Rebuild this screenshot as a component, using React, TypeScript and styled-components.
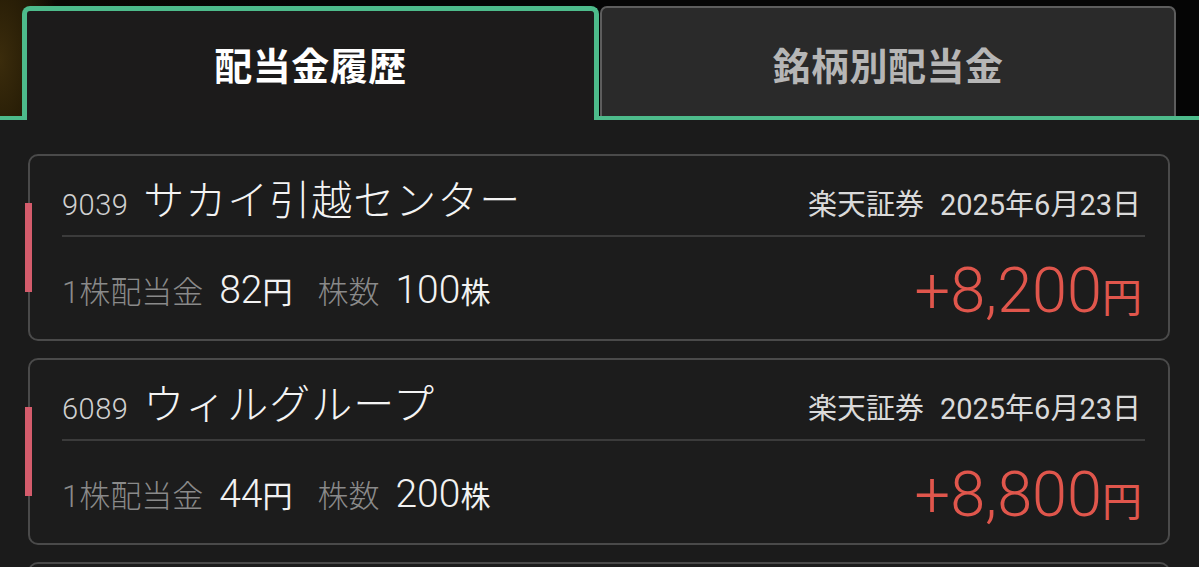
import React from 'react';
import styled, { createGlobalStyle } from 'styled-components';

const GREEN = '#4dbb8b';

const GlobalStyle = createGlobalStyle`
  html, body {
    margin: 0;
    padding: 0;
    background: #1b1b1b;
  }
  body {
    font-family: Roboto, "Noto Sans CJK JP", sans-serif;
  }
`;

const Page = styled.div`
  width: 1199px;
  height: 567px;
  overflow: hidden;
  background: #1b1b1b;
`;

const TabBar = styled.div`
  display: flex;
  align-items: flex-end;
  height: 120px;
  box-sizing: border-box;
  padding: 6px 23px 0 22px;
  border-bottom: 4px solid ${GREEN};
  background:
    radial-gradient(ellipse 60px 140px at 0 60px, #3b2c0c 0, #2a1f07 45%, transparent 100%),
    linear-gradient(90deg, #1d1606 0, #0b0904 60px, #050505 300px);
`;

const Tab = styled.div<{ active?: boolean }>`
  position: relative;
  z-index: 1;
  display: flex;
  align-items: center;
  justify-content: center;
  box-sizing: border-box;
  font-family: "Noto Sans CJK JP", sans-serif;
  font-weight: 700;
  font-size: 38px;
  letter-spacing: 0.5px;
  border-style: solid;
  border-bottom: none;
  ${({ active }) =>
    active
      ? `
    flex: 0 0 577px;
    height: 114px;
    margin-bottom: -4px;
    border-width: 5px;
    border-color: ${GREEN};
    border-radius: 8px 8px 0 0;
    background: #1c1b1b;
    color: #ffffff;
    padding-bottom: 4px;
  `
      : `
    flex: 1;
    height: 110px;
    margin-left: 1px;
    border-width: 2px;
    border-color: #5d5d5d;
    border-radius: 7px 7px 0 0;
    background: #2a2a2a;
    color: #b6b6b6;
    padding-top: 2px;
  `}
`;

const CardList = styled.div`
  display: flex;
  flex-direction: column;
  gap: 17px;
  padding: 34px 29px 0 28px;
`;

const Card = styled.div`
  position: relative;
  box-sizing: border-box;
  height: 187px;
  border: 2px solid #4a4a4a;
  border-radius: 10px;
  background: #1c1c1c;
  padding: 0 23px 0 32px;
`;

const Marker = styled.div`
  position: absolute;
  left: -5px;
  top: 47px;
  width: 7px;
  height: 89px;
  background: #d45c6c;
`;

const TopRow = styled.div`
  display: flex;
  align-items: baseline;
  justify-content: space-between;
  box-sizing: border-box;
  height: 79px;
  padding: 21px 4px 0 0;
`;

const Divider = styled.div`
  height: 2px;
  background: #3b3b3b;
`;

const BottomRow = styled.div`
  display: flex;
  align-items: center;
  justify-content: space-between;
  box-sizing: border-box;
  height: 102px;
  padding: 4px 3px 0 0;
`;

const Group = styled.div`
  display: flex;
  align-items: baseline;
`;

const Code = styled.span`
  font-size: 29px;
  font-weight: 300;
  letter-spacing: 0.5px;
  color: #d0d0d0;
  margin-right: 15px;
  line-height: 1;
`;

const Name = styled.span`
  font-family: "Noto Sans CJK JP", sans-serif;
  font-size: 41px;
  font-weight: 300;
  letter-spacing: 1px;
  color: #f4f4f4;
  line-height: 1;
`;

const Meta = styled.span<{ gap?: number }>`
  font-size: 29px;
  font-weight: 400;
  color: #dadada;
  line-height: 1;
  margin-left: ${({ gap }) => gap ?? 0}px;
`;

const Label = styled.span<{ gap?: number }>`
  font-size: 31px;
  font-weight: 300;
  color: #8a8a8a;
  line-height: 1;
  margin-left: ${({ gap }) => gap ?? 0}px;
  margin-right: 16px;
`;

const Value = styled.span`
  font-size: 39px;
  font-weight: 300;
  color: #f2f2f2;
  line-height: 1;
`;

const Unit = styled.span<{ size: number }>`
  font-family: "Noto Sans CJK JP", sans-serif;
  font-size: ${({ size }) => size}px;
  font-weight: 400;
  line-height: 1;
`;

const Amount = styled.span`
  font-size: 63px;
  font-weight: 300;
  color: #e0564c;
  line-height: 1;
`;

type Dividend = {
  code: string;
  name: string;
  broker: string;
  date: string;
  perShare: number;
  shares: number;
};

const items: Dividend[] = [
  { code: '9039', name: 'サカイ引越センター', broker: '楽天証券', date: '2025年6月23日', perShare: 82, shares: 100 },
  { code: '6089', name: 'ウィルグループ', broker: '楽天証券', date: '2025年6月23日', perShare: 44, shares: 200 },
];

const DividendCard = ({ item }: { item: Dividend }) => (
  <Card>
    <Marker />
    <TopRow>
      <Group>
        <Code>{item.code}</Code>
        <Name>{item.name}</Name>
      </Group>
      <Group>
        <Meta>{item.broker}</Meta>
        <Meta gap={16}>{item.date}</Meta>
      </Group>
    </TopRow>
    <Divider />
    <BottomRow>
      <Group>
        <Label>1株配当金</Label>
        <Value>
          {item.perShare}
          <Unit size={30}>円</Unit>
        </Value>
        <Label gap={25}>株数</Label>
        <Value>
          {item.shares}
          <Unit size={30}>株</Unit>
        </Value>
      </Group>
      <Amount>
        +{(item.perShare * item.shares).toLocaleString('ja-JP')}
        <Unit size={40}>円</Unit>
      </Amount>
    </BottomRow>
  </Card>
);

export default function App() {
  return (
    <Page>
      <GlobalStyle />
      <TabBar>
        <Tab active>配当金履歴</Tab>
        <Tab>銘柄別配当金</Tab>
      </TabBar>
      <CardList>
        {items.map(item => (
          <DividendCard key={item.code} item={item} />
        ))}
        <Card />
      </CardList>
    </Page>
  );
}
